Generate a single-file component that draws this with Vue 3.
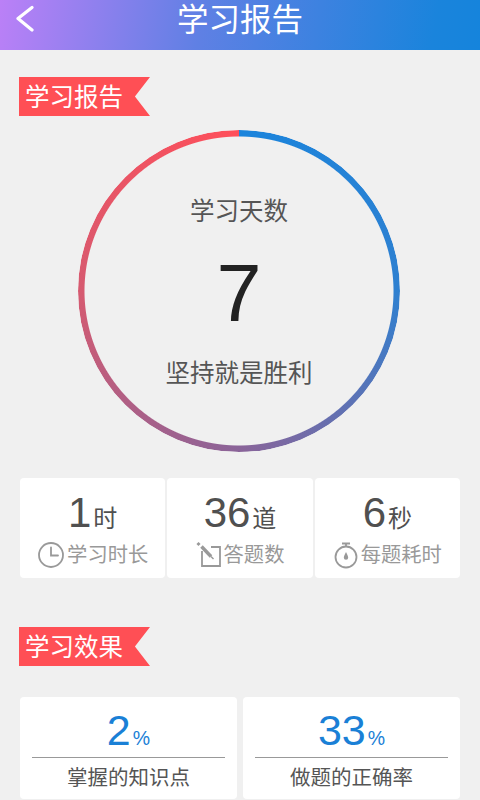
<script setup>
const stats = [
  { value: '1', unit: '时', label: '学习时长', icon: 'clock' },
  { value: '36', unit: '道', label: '答题数', icon: 'edit' },
  { value: '6', unit: '秒', label: '每题耗时', icon: 'timer' }
]
const effects = [
  { value: '2', label: '掌握的知识点' },
  { value: '33', label: '做题的正确率' }
]
</script>

<template>
  <div class="page">
    <header class="bar">
      <svg class="back" width="22" height="28" viewBox="0 0 22 28">
        <path d="M18 3.5 L4 14.5 L18 26" fill="none" stroke="#fff" stroke-width="3.2" stroke-linecap="round" stroke-linejoin="round" />
      </svg>
      <h1 class="title">学习报告</h1>
    </header>

    <div class="ribbon first">学习报告</div>

    <section class="ring">
      <div class="ring-track"></div>
      <div class="ring-top">学习天数</div>
      <div class="ring-num">7</div>
      <div class="ring-bottom">坚持就是胜利</div>
    </section>

    <section class="stats">
      <div v-for="s in stats" :key="s.label" class="stat">
        <div class="stat-val"><span class="num">{{ s.value }}</span><span class="unit">{{ s.unit }}</span></div>
        <div class="stat-label">
          <svg v-if="s.icon === 'clock'" width="28" height="28" viewBox="0 0 28 28" fill="none" stroke="#999" stroke-width="1.8">
            <circle cx="14" cy="14" r="12" />
            <path d="M14 6.5 V14.5 H21" stroke-linecap="round" />
          </svg>
          <svg v-else-if="s.icon === 'edit'" width="26" height="28" viewBox="0 0 26 28" fill="none" stroke="#999" stroke-width="1.8">
            <path d="M6 10 V25 H24 V6 H15" />
            <path d="M1.5 2 L3.5 4" stroke-width="3" />
            <path d="M5.5 5.5 L15 15.5" stroke-width="3.4" />
            <path d="M15 15.5 L17.5 18" stroke-width="1.4" />
          </svg>
          <svg v-else width="26" height="28" viewBox="0 0 26 28" fill="none" stroke="#999" stroke-width="1.8">
            <circle cx="13" cy="16" r="10.5" />
            <path d="M9 2.5 H17 M13 2.5 V5.5" />
            <path d="M13 11 C11.5 14 10.8 15.4 10.8 16.6 A2.2 2.2 0 0 0 15.2 16.6 C15.2 15.4 14.5 14 13 11 Z" fill="#999" stroke="none" />
          </svg>
          <span>{{ s.label }}</span>
        </div>
      </div>
    </section>

    <div class="ribbon second">学习效果</div>

    <section class="effects">
      <div v-for="e in effects" :key="e.label" class="effect">
        <div class="effect-val"><span class="effect-num">{{ e.value }}</span><span class="pct">%</span></div>
        <div class="effect-label">{{ e.label }}</div>
      </div>
    </section>
  </div>
</template>

<style scoped>
.page {
  width: 480px;
  height: 800px;
  overflow: hidden;
  background: #f0f0f0;
  font-family: "Liberation Sans", "Noto Sans CJK SC", sans-serif;
  display: flex;
  flex-direction: column;
}
.bar {
  position: relative;
  flex: none;
  height: 50px;
  background: linear-gradient(100deg, #bb80f7 0%, #5f80e4 42%, #1a84dc 90%, #1584dc 100%);
  display: flex;
  align-items: center;
  justify-content: center;
}
.back {
  position: absolute;
  left: 14px;
  top: 4px;
}
.title {
  margin: 0 0 9px;
  font-size: 31.5px;
  font-weight: 400;
  line-height: 41px;
  color: #fff;
}
.ribbon {
  flex: none;
  align-self: flex-start;
  width: 131px;
  height: 39px;
  margin-left: 19px;
  padding-left: 6px;
  box-sizing: border-box;
  background: #ff4f55;
  clip-path: polygon(0 0, 100% 0, 88.5% 50%, 100% 100%, 0 100%);
  color: #fff;
  font-size: 24.5px;
  line-height: 41px;
}
.first { margin-top: 27px; }
.second { margin-top: 49px; }
.ring {
  position: relative;
  flex: none;
  width: 322px;
  height: 322px;
  margin: 14px 0 0 78px;
  display: flex;
  flex-direction: column;
  align-items: center;
}
.ring-track {
  position: absolute;
  inset: 0;
  border-radius: 50%;
  background: conic-gradient(#1a84dc 0deg, #2f80d0 90deg, #8a6499 180deg, #d65a70 270deg, #ff4f5a 360deg);
  -webkit-mask: radial-gradient(circle closest-side, transparent 154px, #000 155px);
  mask: radial-gradient(circle closest-side, transparent 154px, #000 155px);
}
.ring-top {
  margin-top: 64px;
  font-size: 24.5px;
  line-height: 36px;
  color: #555;
}
.ring-num {
  margin-top: 18px;
  font-size: 81px;
  line-height: 90px;
  color: #222;
}
.ring-bottom {
  margin-top: 18px;
  font-size: 24.5px;
  line-height: 36px;
  color: #555;
}
.stats {
  flex: none;
  margin: 26px 20px 0;
  display: flex;
  gap: 2px;
}
.stat {
  flex: 1;
  height: 100px;
  background: #fff;
  border-radius: 4px;
  display: flex;
  flex-direction: column;
  align-items: center;
}
.stat-val {
  margin-top: 9px;
  height: 54px;
  display: flex;
  align-items: baseline;
  color: #505050;
}
.num {
  font-size: 42px;
  line-height: 52px;
}
.unit {
  margin-left: 2px;
  font-size: 24px;
}
.stat-label {
  display: flex;
  align-items: center;
  gap: 2px;
  font-size: 20.3px;
  line-height: 28px;
  color: #999;
}
.effects {
  flex: none;
  margin: 31px 20px 0;
  display: flex;
  gap: 6px;
}
.effect {
  flex: 1;
  height: 102px;
  background: #fff;
  border-radius: 4px;
  padding: 0 12px;
  box-sizing: border-box;
  display: flex;
  flex-direction: column;
  align-items: center;
}
.effect-val {
  width: 100%;
  height: 61px;
  box-sizing: border-box;
  border-bottom: 1px solid #999;
  display: flex;
  justify-content: center;
  align-items: baseline;
  color: #1a80d6;
}
.effect-num {
  font-size: 43px;
  line-height: 66px;
}
.pct {
  margin-left: 2px;
  font-size: 19.5px;
}
.effect-label {
  font-size: 20.5px;
  line-height: 40px;
  color: #555;
}
</style>

<style>
html, body { margin: 0; background: #f0f0f0; }
</style>
